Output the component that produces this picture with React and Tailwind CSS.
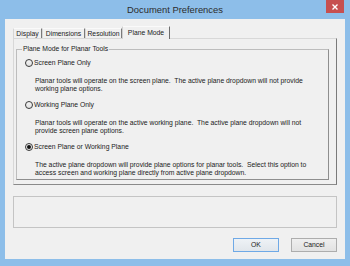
import React from 'react';

const FONT = { fontFamily: '"Liberation Sans", Arial, sans-serif' };

const tabs = [
  { label: 'Display', width: 'w-[29px]' },
  { label: 'Dimensions', width: 'w-[43px]' },
  { label: 'Resolution', width: 'w-[37px]' },
];

const options = [
  {
    label: 'Screen Plane Only',
    lines: [
      'Planar tools will operate on the screen plane.  The active plane dropdown will not provide',
      'working plane options.',
    ],
    checked: false,
  },
  {
    label: 'Working Plane Only',
    lines: [
      'Planar tools will operate on the active working plane.  The active plane dropdown will not',
      'provide screen plane options.',
    ],
    checked: false,
  },
  {
    label: 'Screen Plane or Working Plane',
    lines: [
      'The active plane dropdown will provide plane options for planar tools.  Select this option to',
      'access screen and working plane directly from active plane dropdown.',
    ],
    checked: true,
  },
];

const Radio = ({ checked }) => (
  <span className="w-[8px] h-[8px] rounded-full border border-[#3a3a3a] bg-gradient-to-b from-[#f4f4f4] to-[#e2e2e2] flex items-center justify-center shrink-0">
    {checked && <span className="w-[4px] h-[4px] rounded-full bg-[#111]" />}
  </span>
);

const PlaneOption = ({ option, first }) => (
  <div className={first ? '' : 'mt-[9px]'}>
    <div className="flex items-center h-[8px] pl-[8px]">
      <Radio checked={option.checked} />
      <span className="ml-[1px] leading-[8px]">{option.label}</span>
    </div>
    <div className="mt-[10px] ml-[18px] leading-[7.5px] whitespace-pre">
      {option.lines.map((line) => (
        <div key={line}>{line}</div>
      ))}
    </div>
  </div>
);

export default function App() {
  return (
    <div
      className="w-[350px] h-[266px] bg-[#8dbee9] flex flex-col text-[6.8px] text-[#1b1b1b]"
      style={FONT}
    >
      {/* Title bar */}
      <div className="h-[19px] flex px-[6px] shrink-0">
        <div className="w-[18px]" />
        <div className="flex-1 text-center text-[9.4px] leading-[19px] text-[#2c2c2c]">
          Document Preferences
        </div>
        <button className="w-[18px] h-[13px] bg-[#c75050] flex items-center justify-center">
          <svg width="6" height="6" viewBox="0 0 6 6">
            <path d="M0.5 0.5 L5.5 5.5 M5.5 0.5 L0.5 5.5" stroke="#fff" strokeWidth="1.4" />
          </svg>
        </button>
      </div>

      {/* Client area */}
      <div className="mx-[5px] h-[240px] bg-[#f0f0f0] flex flex-col pt-[7px] px-[8px]">
        {/* Tabs */}
        <div className="h-[12px] flex items-end">
          {tabs.map((tab) => (
            <div
              key={tab.label}
              className={`${tab.width} h-[10px] border-l border-t border-l-[#d6d6d6] border-t-[#fafafa] border-r border-r-[#7a7a7a] flex items-center justify-center leading-[10px]`}
            >
              {tab.label}
            </div>
          ))}
          <div className="w-[48px] h-[13px] mb-[-1px] relative z-10 bg-[#f0f0f0] border-l border-t border-l-[#cfcfcf] border-t-[#fafafa] border-r border-r-[#6e6e6e] flex items-start justify-center pt-[1px] leading-[10px]">
            Plane Mode
          </div>
        </div>

        {/* Tab page */}
        <div className="h-[147px] border border-l-[#d8d8d8] border-t-[#d8d8d8] border-r-[#7a7a7a] border-b-[#8a8a8a] flex flex-col">
          <fieldset className="mt-[6px] ml-[2px] w-[313px] h-[135px] border border-l-[#bdbdbd] border-t-[#bdbdbd] border-r-[#8e8e8e] border-b-[#8e8e8e]">
            <legend className="ml-[5px] px-[1px] leading-[8px]">Plane Mode for Planar Tools</legend>
            <div className="pt-[6px]">
              {options.map((option, i) => (
                <PlaneOption key={option.label} option={option} first={i === 0} />
              ))}
            </div>
          </fieldset>
        </div>

        {/* Info box */}
        <div className="mt-[11px] h-[32px] border border-[#c4c4c4]" />

        {/* Buttons */}
        <div className="mt-[10px] flex justify-end gap-[12px]">
          <button className="w-[46px] h-[14px] border border-[#6fa9e6] bg-gradient-to-b from-[#eef2f6] to-[#e1e6eb] leading-[12px] text-center">
            OK
          </button>
          <button className="w-[46px] h-[14px] border border-[#adadad] bg-gradient-to-b from-[#efefef] to-[#e2e2e2] leading-[12px] text-center">
            Cancel
          </button>
        </div>
      </div>
    </div>
  );
}
